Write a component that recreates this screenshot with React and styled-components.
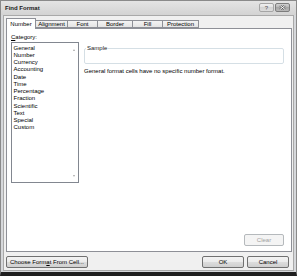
import React from 'react';
import styled, { createGlobalStyle } from 'styled-components';

const GlobalStyle = createGlobalStyle`
  html, body {
    margin: 0;
    padding: 0;
    background: #ffffff;
  }
  * {
    box-sizing: border-box;
  }
`;

const Window = styled.div`
  width: 297px;
  height: 276px;
  display: flex;
  flex-direction: column;
  background: #d6d8db;
  border: 1px solid #8a8a8a;
  border-bottom: 4px solid #1f1f1f;
  padding: 0 2px 1px 2px;
  font-family: "Liberation Sans", Arial, sans-serif;
  font-size: 6px;
  color: #000;
`;

const TitleBar = styled.div`
  height: 14px;
  display: flex;
  align-items: flex-start;
  justify-content: space-between;
  margin: 0 -2px;
  padding: 0 6px 0 4px;
  background: linear-gradient(#e4e4e4, #d3d3d3);
`;

const Title = styled.div`
  font-weight: bold;
  font-size: 6px;
  line-height: 14px;
  color: #1a1a1a;
`;

const CaptionButtons = styled.div`
  display: flex;
  gap: 1px;
  margin-top: 2px;
`;

const CaptionButton = styled.div`
  width: ${p => p.$w}px;
  height: 9px;
  border: 1px solid ${p => (p.$close ? '#7d7d7d' : '#a5a5a5')};
  border-radius: 2px;
  background: ${p =>
    p.$close
      ? 'linear-gradient(#d2d2d2, #b4b4b4 50%, #a6a6a6 50%, #b8b8b8)'
      : 'linear-gradient(#f0f0f0, #e0e0e0 50%, #d4d4d4 50%, #dcdcdc)'};
  display: flex;
  align-items: center;
  justify-content: center;
  font-size: 6px;
  line-height: 1;
  color: #555;
`;

const Body = styled.div`
  flex: 1;
  display: flex;
  flex-direction: column;
  background: #f0f0f0;
  border: 1px solid #a9a9a9;
  padding: 2px 1px 2px 2px;
`;

const TabRow = styled.div`
  height: 10px;
  display: flex;
  align-items: flex-end;
  position: relative;
  z-index: 1;
`;

const Tab = styled.div`
  width: ${p => p.$w}px;
  height: ${p => (p.$active ? 11 : 8)}px;
  margin-bottom: ${p => (p.$active ? -1 : 0)}px;
  margin-left: ${p => (p.$first ? 0 : -1)}px;
  border: 1px solid #8e9097;
  border-bottom: ${p => (p.$active ? 'none' : '1px solid #8e9097')};
  background: ${p => (p.$active ? '#ffffff' : 'linear-gradient(#f3f3f3, #e4e4e4)')};
  display: flex;
  align-items: center;
  justify-content: center;
  line-height: 1;
  padding-bottom: ${p => (p.$active ? 1 : 0)}px;
  position: relative;
  z-index: ${p => (p.$active ? 2 : 1)};
`;

const Panel = styled.div`
  flex: 1;
  display: flex;
  flex-direction: column;
  background: #ffffff;
  border: 1px solid #8e9097;
  padding: 4px 7px 5px 4px;
`;

const TopArea = styled.div`
  display: flex;
  gap: 5px;
`;

const LeftCol = styled.div`
  width: 68px;
  display: flex;
  flex-direction: column;
`;

const Label = styled.div`
  line-height: 8px;
  height: 8px;
  margin-bottom: 1px;
`;

const ListBox = styled.div`
  height: 141px;
  border: 1px solid #828790;
  display: flex;
`;

const Items = styled.div`
  flex: 1;
  padding: 1.5px 0 0 1.5px;
`;

const Item = styled.div`
  line-height: 7.27px;
  height: 7.27px;
  white-space: nowrap;
`;

const ScrollBar = styled.div`
  width: 8px;
  display: flex;
  flex-direction: column;
  justify-content: space-between;
  align-items: center;
  padding: 6px 0 5px 0;
`;

const Arrow = styled.div`
  width: 0;
  height: 0;
  border-left: 1.5px solid transparent;
  border-right: 1.5px solid transparent;
  ${p => (p.$up ? 'border-bottom' : 'border-top')}: 2px solid #a8a8a8;
`;

const RightCol = styled.div`
  flex: 1;
  display: flex;
  flex-direction: column;
  padding-top: 11px;
`;

const SampleBox = styled.fieldset`
  margin: 0;
  padding: 0;
  border: 1px solid #d5dfe5;
  border-radius: 2px;
  min-width: 0;
`;

const Legend = styled.legend`
  padding: 0 1px;
  margin-left: 1px;
  line-height: 8px;
  font-size: 6px;
  color: #1a1a1a;
`;

const SampleInner = styled.div`
  height: 11px;
`;

const Description = styled.div`
  margin-top: 3px;
  line-height: 8px;
`;

const Spacer = styled.div`
  flex: 1;
`;

const Button = styled.div`
  width: ${p => p.$w}px;
  height: 12px;
  border: 1px solid ${p => (p.$disabled ? '#b5b9bc' : '#707070')};
  border-radius: 2px;
  background: ${p =>
    p.$disabled
      ? '#f4f4f4'
      : 'linear-gradient(#f3f3f3, #ebebeb 50%, #dddddd 50%, #cfcfcf)'};
  color: ${p => (p.$disabled ? '#a0a0a0' : '#000')};
  display: flex;
  align-items: center;
  justify-content: center;
  line-height: 1;
  white-space: nowrap;
`;

const ClearRow = styled.div`
  display: flex;
  justify-content: flex-end;
`;

const BottomRow = styled.div`
  display: flex;
  align-items: center;
  margin-top: 4px;
  padding-right: 3px;
  gap: 3px;
`;

const U = styled.span`
  text-decoration: underline;
`;

const categories = [
  'General',
  'Number',
  'Currency',
  'Accounting',
  'Date',
  'Time',
  'Percentage',
  'Fraction',
  'Scientific',
  'Text',
  'Special',
  'Custom',
];

const tabs = [
  { name: 'Number', w: 30 },
  { name: 'Alignment', w: 33 },
  { name: 'Font', w: 31 },
  { name: 'Border', w: 36 },
  { name: 'Fill', w: 31 },
  { name: 'Protection', w: 37 },
];

const CloseGlyph = () => (
  <svg width="7" height="5" viewBox="0 0 7 5">
    <path d="M1 0.5 L6 4.5 M6 0.5 L1 4.5" stroke="#555" strokeWidth="2" />
    <path d="M1 0.5 L6 4.5 M6 0.5 L1 4.5" stroke="#fff" strokeWidth="1" />
  </svg>
);

const App = () => {
  return (
    <>
      <GlobalStyle />
      <Window>
        <TitleBar>
          <Title>Find Format</Title>
          <CaptionButtons>
            <CaptionButton $w={15}>?</CaptionButton>
            <CaptionButton $w={15} $close>
              <CloseGlyph />
            </CaptionButton>
          </CaptionButtons>
        </TitleBar>

        <Body>
          <TabRow>
            {tabs.map((t, i) => (
              <Tab key={t.name} $w={t.w} $first={i === 0} $active={i === 0}>
                {t.name}
              </Tab>
            ))}
          </TabRow>

          <Panel>
            <TopArea>
              <LeftCol>
                <Label>
                  <U>C</U>ategory:
                </Label>
                <ListBox>
                  <Items>
                    {categories.map(c => (
                      <Item key={c}>{c}</Item>
                    ))}
                  </Items>
                  <ScrollBar>
                    <Arrow $up />
                    <Arrow />
                  </ScrollBar>
                </ListBox>
              </LeftCol>

              <RightCol>
                <SampleBox>
                  <Legend>Sample</Legend>
                  <SampleInner />
                </SampleBox>
                <Description>
                  General format cells have no specific number format.
                </Description>
              </RightCol>
            </TopArea>

            <Spacer />
            <ClearRow>
              <Button $w={40} $disabled>Clear</Button>
            </ClearRow>
          </Panel>

          <BottomRow>
            <Button $w={82}>
              Choose Form<U>a</U>t From Cell...
            </Button>
            <Spacer />
            <Button $w={42}>OK</Button>
            <Button $w={42}>Cancel</Button>
          </BottomRow>
        </Body>
      </Window>
    </>
  );
};

export default App;
